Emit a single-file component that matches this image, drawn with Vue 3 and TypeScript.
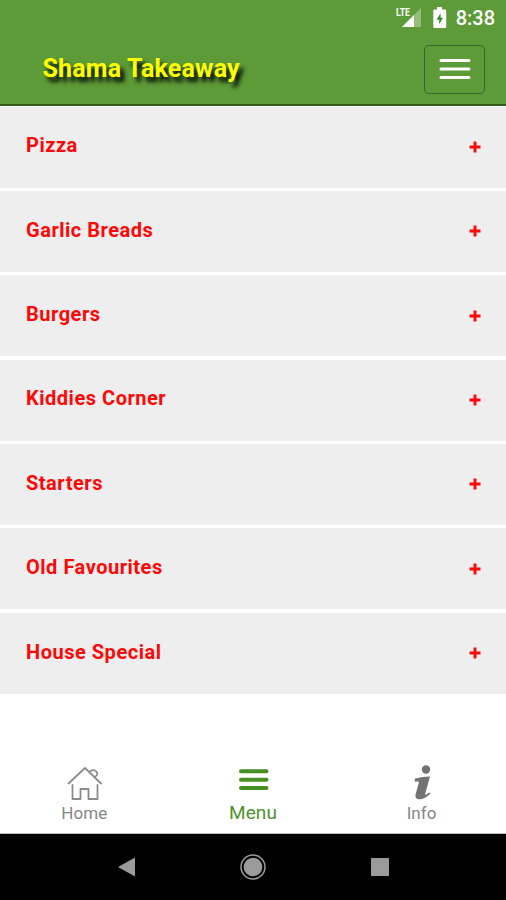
<script setup lang="ts">
const categories: string[] = [
  'Pizza',
  'Garlic Breads',
  'Burgers',
  'Kiddies Corner',
  'Starters',
  'Old Favourites',
  'House Special',
]
</script>

<template>
  <div class="screen">
    <header class="header">
      <div class="status">
        <svg class="signal" width="28" height="22" viewBox="0 0 28 22">
          <path d="M25 2V21H6Z" fill="#fff" opacity=".35" />
          <path d="M18 9V21H6Z" fill="#fff" />
          <text x="0" y="10.200" class="lte" textLength="14" lengthAdjust="spacingAndGlyphs">LTE</text>
        </svg>
        <svg class="battery" width="14" height="22" viewBox="0 0 14 22">
          <path d="M4 0h5v2.500h3a1.200 1.200 0 0 1 1.200 1.200v16A1.200 1.200 0 0 1 12 21H1.500A1.200 1.200 0 0 1 .3 19.700v-16A1.200 1.200 0 0 1 1.500 2.500H4Z" fill="#fff" />
          <path d="M7.600 6.300 3.500 12.800H6.200V17.300L10 10.800H7.600Z" fill="#3c8c24" />
        </svg>
        <span class="clock">8:38</span>
      </div>
      <div class="bar">
        <h1 class="brand">Shama Takeaway</h1>
        <button class="toggle" aria-label="Toggle navigation">
          <svg width="32" height="22" viewBox="0 0 32 22">
            <path d="M2 2.500H30M2 11H30M2 19.500H30" stroke="#fff" stroke-width="3" stroke-linecap="round" />
          </svg>
        </button>
      </div>
    </header>

    <main class="list">
      <div v-for="name in categories" :key="name" class="row">
        <span>{{ name }}</span>
        <svg class="plus" width="12" height="12" viewBox="0 0 12 12">
          <path d="M6 .5V11.500M.5 6H11.500" stroke="#fc0808" stroke-width="2.900" />
        </svg>
      </div>
    </main>

    <nav class="tabs">
      <a class="tab">
        <svg width="36" height="36" viewBox="0 0 36 36" fill="none" stroke="#8c8c8c" stroke-width="1.800" stroke-linejoin="round" stroke-linecap="round">
          <path d="M2.500 18.500 19 3 35 18.500M24.500 6a4 3.200 0 0 1 5.200 5.200M6.500 20V34H14.500V24H22.500V34H31.500V20" />
        </svg>
        <span>Home</span>
      </a>
      <a class="tab active">
        <svg width="36" height="36" viewBox="0 0 36 36">
          <path d="M6 6.300H31.500M6 14.700H31.500M6 23.100H31.500" stroke="#468f22" stroke-width="4" stroke-linecap="round" />
        </svg>
        <span>Menu</span>
      </a>
      <a class="tab">
        <svg width="36" height="36" viewBox="0 0 36 36" fill="#737373">
          <circle cx="22" cy="4.500" r="4.200" />
          <path d="M11 13.500C14.500 12.700 19 11.700 26 11.500L21.300 28.500C20.900 30.200 21.500 30.200 25.500 27.500L26.500 28.800C22 32.500 19 34.300 15.500 34.300C12 34.300 11 32 11.600 29.300L14.800 18C15.200 16.500 14.500 16.300 10.500 16.800Z" />
        </svg>
        <span>Info</span>
      </a>
    </nav>

    <footer class="system">
      <div><svg width="18" height="20" viewBox="0 0 18 20"><path d="M0 10 17 .5V19.500Z" fill="#9b9b9b" /></svg></div>
      <div><svg width="28" height="28" viewBox="0 0 28 28"><circle cx="14" cy="14" r="12" fill="none" stroke="#9b9b9b" stroke-width="1.500" /><circle cx="14" cy="14" r="9.300" fill="#9b9b9b" /></svg></div>
      <div><svg width="18" height="18" viewBox="0 0 18 18"><rect width="18" height="18" fill="#9b9b9b" /></svg></div>
    </footer>
  </div>
</template>

<style>
body {
  margin: 0;
}
</style>

<style scoped>
.screen {
  width: 506px;
  height: 900px;
  display: flex;
  flex-direction: column;
  background: #fff;
  font-family: Roboto, 'Liberation Sans', sans-serif;
  overflow: hidden;
}
.header {
  box-sizing: border-box;
  height: 106px;
  background: #5c9b37;
  border-bottom: 2px solid #315a1a;
}
.status {
  height: 36px;
  display: flex;
  justify-content: flex-end;
  align-items: center;
  padding-right: 11px;
  box-sizing: border-box;
}
.signal {
  margin: 0 9px 2px 0;
}
.battery {
  margin-right: 9px;
}
.lte {
  font: 700 10.500px Roboto, sans-serif;
  fill: #fff;
}
.clock {
  font-size: 20px;
  font-weight: 500;
  line-height: 36px;
  color: #fff;
}
.bar {
  display: flex;
  align-items: center;
  justify-content: space-between;
  height: 66px;
  padding: 0 21px 0 42.500px;
}
.brand {
  margin: 0 0 1px;
  font-size: 25px;
  line-height: 30px;
  font-weight: 700;
  letter-spacing: 0.200px;
  color: #ff0;
  text-shadow: 4px 5px 4px #000;
}
.toggle {
  display: flex;
  align-items: center;
  justify-content: center;
  box-sizing: border-box;
  width: 61px;
  height: 49px;
  padding: 0;
  background: transparent;
  border: 1.500px solid #3c652a;
  border-radius: 5px;
}
.list {
  display: grid;
  grid-template-rows: repeat(7, 81px);
  row-gap: 3.400px;
  padding-top: 0.500px;
  height: 588px;
  box-sizing: border-box;
}
.row {
  display: flex;
  align-items: center;
  justify-content: space-between;
  box-sizing: border-box;
  padding: 0 25px 3.500px 26px;
  background: #eee;
  color: #fc0808;
  font-size: 20px;
  font-weight: 700;
  letter-spacing: 0.520px;
}
.plus {
  margin-top: 3px;
}
.tabs {
  flex: 1;
  display: grid;
  grid-template-columns: repeat(3, 1fr);
  padding-top: 71px;
  border-bottom: 1px solid #bbb;
}
.tab {
  display: flex;
  flex-direction: column;
  align-items: center;
  color: #868686;
  font-size: 17px;
  font-weight: 400;
  line-height: 24px;
  letter-spacing: 0.100px;
}
.tab.active {
  color: #4c9428;
  font-size: 19px;
}
.system {
  height: 66px;
  display: grid;
  grid-template-columns: repeat(3, 126.500px);
  justify-content: center;
  background: #000;
}
.system > div {
  display: flex;
  align-items: center;
  justify-content: center;
}
</style>
